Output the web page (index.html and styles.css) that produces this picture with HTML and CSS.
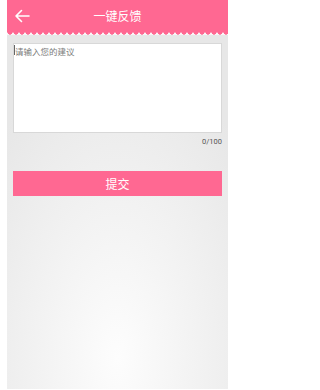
FILE: index.html
```html
<!DOCTYPE html>
<html lang="zh">
<head>
<meta charset="utf-8">
<meta name="viewport" content="width=235, initial-scale=1">
<title>一键反馈</title>
<link rel="stylesheet" href="styles.css">
</head>
<body>
<div class="app">
  <header class="bar">
    <svg class="back" width="16" height="14" viewBox="0 0 16 14" aria-hidden="true">
      <path d="M15 7H2M7.5 1.5L2 7l5.5 5.5" fill="none" stroke="#fff" stroke-width="1.6" stroke-linecap="round" stroke-linejoin="round"/>
    </svg>
    <h1 class="title">一键反馈</h1>
  </header>
  <div class="scallop"></div>
  <main class="content">
    <div class="field">
      <textarea class="input" placeholder="请输入您的建议" maxlength="100"></textarea>
      <span class="caret"></span>
    </div>
    <div class="count">0/100</div>
    <button class="submit" type="button">提交</button>
  </main>
</div>
</body>
</html>
```

FILE: styles.css
```css
html, body {
  margin: 0;
  padding: 0;
  background: #fff;
}
body {
  font-family: "Noto Sans CJK SC", "Noto Sans", "Liberation Sans", sans-serif;
}
.app {
  margin: 0 0 0 7px;
  width: 221px;
  height: 389px;
  display: flex;
  flex-direction: column;
  background: radial-gradient(ellipse 75% 80% at 50% 92%, #fdfdfd 0%, #f3f3f3 45%, #e7e7e7 100%);
}
.bar {
  height: 32px;
  background: #ff6892;
  display: flex;
  align-items: center;
  position: relative;
  flex: none;
}
.back {
  margin-left: 7px;
  margin-top: -1px;
}
.title {
  position: absolute;
  left: 0;
  right: 0;
  top: 0;
  margin: 0;
  line-height: 32px;
  text-align: center;
  font-size: 12px;
  font-weight: normal;
  color: #fff;
  pointer-events: none;
}
.scallop {
  height: 3px;
  flex: none;
  background: radial-gradient(circle at 3px 0, #ff6892 2.4px, #f7f7f7 2.9px) repeat-x 0 0 / 6px 3px;
}
.content {
  padding: 8px 6px 0;
  display: flex;
  flex-direction: column;
}
.field {
  position: relative;
}
.input {
  display: block;
  box-sizing: border-box;
  width: 100%;
  height: 90px;
  margin: 0;
  padding: 1px 1px;
  border: 1px solid #d8d8d8;
  background: #fff;
  resize: none;
  outline: none;
  font-family: inherit;
  font-size: 8.5px;
  line-height: 12px;
  color: #333;
}
.input::placeholder {
  color: #7a7a7a;
}
.caret {
  position: absolute;
  left: 1px;
  top: 2px;
  width: 1px;
  height: 10px;
  background: #666;
}
.count {
  text-align: right;
  font-size: 7.5px;
  line-height: 10px;
  color: #555;
  margin-top: 4px;
  font-family: "Roboto", "Liberation Sans", sans-serif;
}
.submit {
  margin-top: 24px;
  height: 25px;
  border: 0;
  padding: 0;
  background: #ff6892;
  color: #fff;
  font-family: inherit;
  font-size: 12px;
  line-height: 25px;
}
```
